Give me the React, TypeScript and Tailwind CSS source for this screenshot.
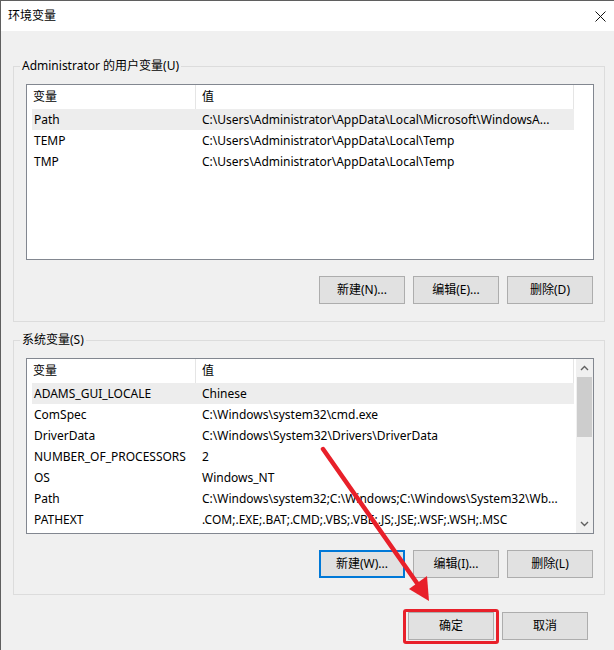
import React from 'react';

const FONT = "font-['Noto_Sans','Noto_Sans_CJK_SC',sans-serif]";

type Row = { name: string; value: string };

const USER_VARS: Row[] = [
  { name: 'Path', value: 'C:\\Users\\Administrator\\AppData\\Local\\Microsoft\\WindowsA...' },
  { name: 'TEMP', value: 'C:\\Users\\Administrator\\AppData\\Local\\Temp' },
  { name: 'TMP', value: 'C:\\Users\\Administrator\\AppData\\Local\\Temp' },
];

const SYSTEM_VARS: Row[] = [
  { name: 'ADAMS_GUI_LOCALE', value: 'Chinese' },
  { name: 'ComSpec', value: 'C:\\Windows\\system32\\cmd.exe' },
  { name: 'DriverData', value: 'C:\\Windows\\System32\\Drivers\\DriverData' },
  { name: 'NUMBER_OF_PROCESSORS', value: '2' },
  { name: 'OS', value: 'Windows_NT' },
  { name: 'Path', value: 'C:\\Windows\\system32;C:\\Windows;C:\\Windows\\System32\\Wb...' },
  { name: 'PATHEXT', value: '.COM;.EXE;.BAT;.CMD;.VBS;.VBE;.JS;.JSE;.WSF;.WSH;.MSC' },
];

function WinButton({ label, focused }: { label: string; focused?: boolean }) {
  return (
    <button
      className={`w-[86px] h-[28px] bg-[#e1e1e1] text-[12px] text-black flex items-center justify-center ${
        focused ? 'border-2 border-[#0078d7]' : 'border border-[#adadad]'
      }`}
    >
      {label}
    </button>
  );
}

function VarList({ rows, scrollbar }: { rows: Row[]; scrollbar?: boolean }) {
  return (
    <div className="w-[568px] h-[176px] border border-[#828790] bg-white flex overflow-hidden">
      <div className="flex-1 pl-[5px]">
        <div className="w-[542px]">
          {/* header */}
          <div className="h-[24px] flex items-center border-r border-[#e5e5e5]">
            <div className="w-[164px] h-full pl-[1px] flex items-center border-r border-[#e5e5e5]">变量</div>
            <div className="pl-[6px]">值</div>
          </div>
          {rows.map((r, i) => (
            <div key={r.name + i} className={`h-[21px] pt-[1px] flex items-center ${i === 0 ? 'bg-[#ededed]' : ''}`}>
              <div className="w-[164px] pl-[2px] whitespace-nowrap overflow-hidden">{r.name}</div>
              <div className="pl-[6px] flex-1 whitespace-nowrap overflow-hidden">{r.value}</div>
            </div>
          ))}
        </div>
      </div>
      {scrollbar && (
        <div className="w-[17px] h-full bg-[#f0f0f0] flex flex-col">
          <div className="h-[18px] flex items-center justify-center">
            <svg width="9" height="6" viewBox="0 0 9 6">
              <polyline points="1,5 4.5,1.5 8,5" fill="none" stroke="#606060" strokeWidth="1.4" />
            </svg>
          </div>
          <div className="h-[60px] mx-[1px] bg-[#cdcdcd]" />
          <div className="flex-1" />
          <div className="h-[18px] flex items-center justify-center">
            <svg width="9" height="6" viewBox="0 0 9 6">
              <polyline points="1,1 4.5,4.5 8,1" fill="none" stroke="#606060" strokeWidth="1.4" />
            </svg>
          </div>
        </div>
      )}
    </div>
  );
}

function Group({
  title,
  rows,
  buttons,
  scrollbar,
  className,
}: {
  title: string;
  rows: Row[];
  buttons: { label: string; focused?: boolean }[];
  scrollbar?: boolean;
  className: string;
}) {
  return (
    <fieldset className={`w-[592px] ml-[12px] border border-[#dcdcdc] ${className}`}>
      <legend className="ml-[6px] px-[2px] leading-[16px] text-[12px]">{title}</legend>
      <div className="pl-[12px] pr-[10px]">
        <div className="mt-[10px]">
          <VarList rows={rows} scrollbar={scrollbar} />
        </div>
        <div className="flex justify-end gap-[8px] mr-[1px] mt-[16px]">
          {buttons.map((b) => (
            <WinButton key={b.label} label={b.label} focused={b.focused} />
          ))}
        </div>
      </div>
    </fieldset>
  );
}

export default function App() {
  return (
    <div className={`relative w-[614px] h-[650px] bg-[#f0f0f0] border-l border-t border-[#5f5f5f] overflow-hidden text-[12px] text-black ${FONT}`}>
      {/* title bar */}
      <div className="h-[30px] bg-white flex items-center justify-between pl-[7px] pr-[8px]">
        <span>环境变量</span>
        <svg width="11" height="11" viewBox="0 0 11 11">
          <path d="M0.5 0.5 L10.5 10.5 M10.5 0.5 L0.5 10.5" stroke="#111" strokeWidth="1" />
        </svg>
      </div>

      <Group
        className="mt-[27px] pb-[17px]"
        title="Administrator 的用户变量(U)"
        rows={USER_VARS}
        buttons={[{ label: '新建(N)...' }, { label: '编辑(E)...' }, { label: '删除(D)' }]}
      />
      <Group
        className="mt-[10px] pb-[16px]"
        title="系统变量(S)"
        rows={SYSTEM_VARS}
        scrollbar
        buttons={[{ label: '新建(W)...', focused: true }, { label: '编辑(I)...' }, { label: '删除(L)' }]}
      />

      {/* dialog buttons */}
      <div className="flex justify-end gap-[8px] mt-[17px] mr-[26px]">
        <WinButton label="确定" />
        <WinButton label="取消" />
      </div>

      {/* annotation: red highlight box */}
      <div className="absolute left-[402px] top-[608px] w-[96px] h-[35px] border-[3px] border-[#e8202a] rounded-[3px]" />
      {/* annotation: red arrow */}
      <svg className="absolute left-0 top-0 pointer-events-none" width="614" height="650" viewBox="0 0 614 650">
        <line x1="322" y1="448" x2="418" y2="585" stroke="#e8202a" strokeWidth="4.5" strokeLinecap="round" />
        <polygon points="428,600 408,588 426,575" fill="#e8202a" />
      </svg>
    </div>
  );
}
